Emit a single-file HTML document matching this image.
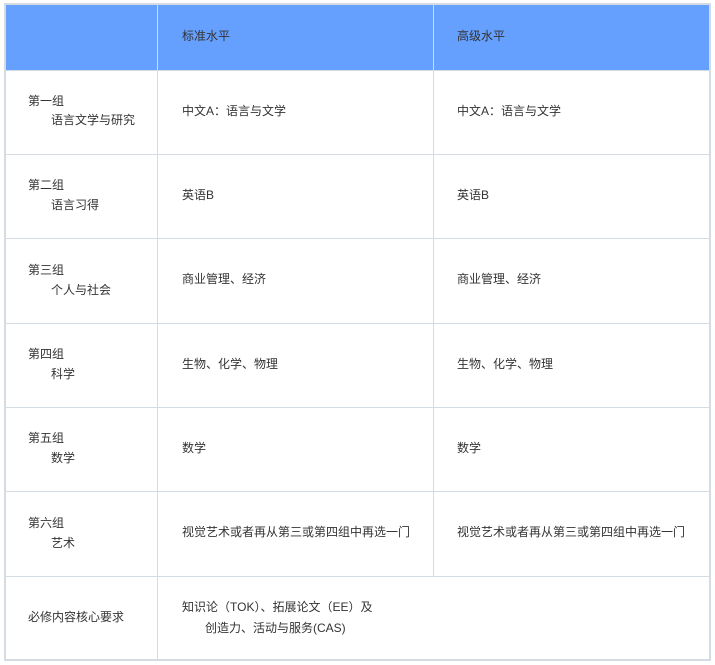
<!DOCTYPE html>
<html><head><meta charset="utf-8"><style>
body{margin:0;width:715px;height:665px;background:#fff;position:relative;font-family:"Liberation Sans","Noto Sans CJK SC",sans-serif;font-size:12px;color:#333;overflow:hidden}
.h{position:absolute;left:5px;top:4px;width:705px;height:66px;background:#66a0ff}
.v,.hl{position:absolute;background:#d5dbe3}
.t{position:absolute;line-height:20px;white-space:nowrap}
</style></head><body>
<div class="h"></div>
<!-- outer borders -->
<div class="hl" style="left:4px;top:3px;width:707px;height:2px"></div>
<div class="hl" style="left:4px;top:659px;width:707px;height:2px"></div>
<div class="v" style="left:4px;top:3px;width:2px;height:658px"></div>
<div class="v" style="left:709px;top:3px;width:2px;height:658px"></div>
<div class="v" style="left:157px;top:3px;width:1px;height:658px"></div>
<div class="v" style="left:433px;top:3px;width:1px;height:573px"></div>
<div class="hl" style="left:4px;top:70px;width:707px;height:1px"></div>
<div class="hl" style="left:4px;top:154px;width:707px;height:1px"></div>
<div class="hl" style="left:4px;top:238px;width:707px;height:1px"></div>
<div class="hl" style="left:4px;top:323px;width:707px;height:1px"></div>
<div class="hl" style="left:4px;top:407px;width:707px;height:1px"></div>
<div class="hl" style="left:4px;top:491px;width:707px;height:1px"></div>
<div class="hl" style="left:4px;top:576px;width:707px;height:1px"></div>

<div class="t" style="left:182px;top:26px">标准水平</div>
<div class="t" style="left:457px;top:26px">高级水平</div>

<div class="t" style="left:28px;top:91px">第一组</div><div class="t" style="left:51px;top:110px">语言文学与研究</div>
<div class="t" style="left:182px;top:101px">中文A：语言与文学</div><div class="t" style="left:457px;top:101px">中文A：语言与文学</div>

<div class="t" style="left:28px;top:175px">第二组</div><div class="t" style="left:51px;top:195px">语言习得</div>
<div class="t" style="left:182px;top:185px">英语B</div><div class="t" style="left:457px;top:185px">英语B</div>

<div class="t" style="left:28px;top:260px">第三组</div><div class="t" style="left:51px;top:280px">个人与社会</div>
<div class="t" style="left:182px;top:269px">商业管理、经济</div><div class="t" style="left:457px;top:269px">商业管理、经济</div>

<div class="t" style="left:28px;top:344px">第四组</div><div class="t" style="left:51px;top:364px">科学</div>
<div class="t" style="left:182px;top:354px">生物、化学、物理</div><div class="t" style="left:457px;top:354px">生物、化学、物理</div>

<div class="t" style="left:28px;top:428px">第五组</div><div class="t" style="left:51px;top:448px">数学</div>
<div class="t" style="left:182px;top:438px">数学</div><div class="t" style="left:457px;top:438px">数学</div>

<div class="t" style="left:28px;top:513px">第六组</div><div class="t" style="left:51px;top:533px">艺术</div>
<div class="t" style="left:182px;top:522px">视觉艺术或者再从第三或第四组中再选一门</div><div class="t" style="left:457px;top:522px">视觉艺术或者再从第三或第四组中再选一门</div>

<div class="t" style="left:28px;top:607px">必修内容核心要求</div>
<div class="t" style="left:182px;top:597px">知识论（TOK）、拓展论文（EE）及</div>
<div class="t" style="left:205px;top:618px">创造力、活动与服务(CAS)</div>
</body></html>
